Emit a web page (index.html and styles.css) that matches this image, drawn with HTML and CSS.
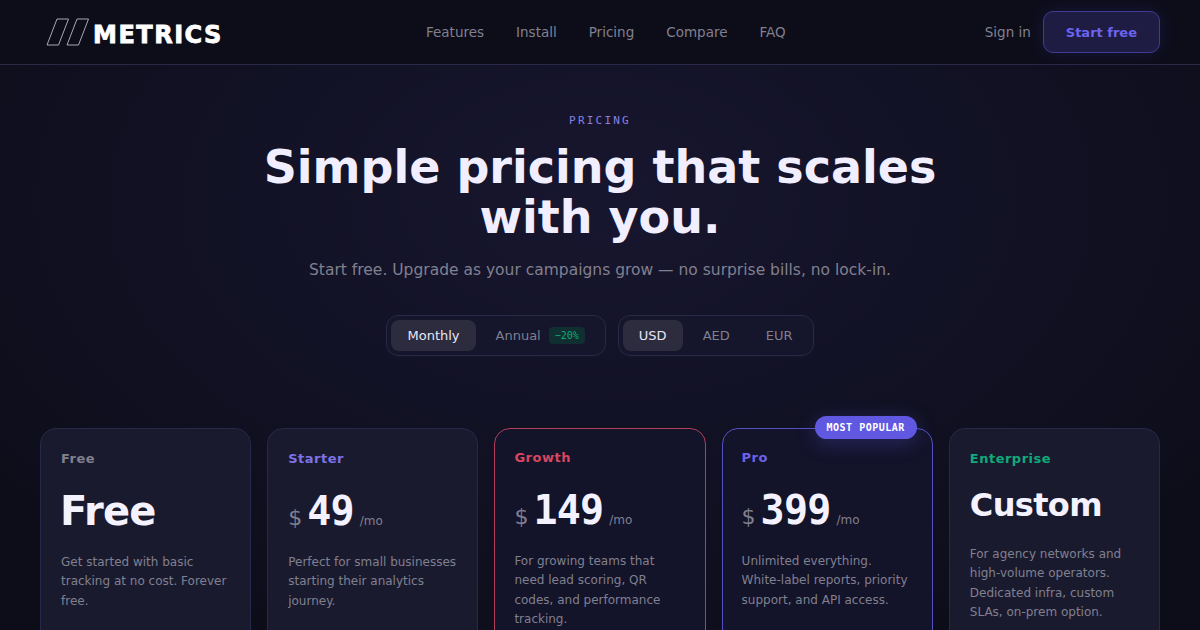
FILE: index.html
```html
<!DOCTYPE html>
<html lang="en">
<head>
    <meta charset="UTF-8">
    <meta name="viewport" content="width=device-width, initial-scale=1.0">
    <title>Pricing - Metrics</title>
    <link rel="stylesheet" href="styles.css">
</head>
<body>
    <!-- Navigation Bar -->
    <nav class="topbar">
        <a class="logo" href="#">
            <svg class="logo-mark" width="44" height="28" viewBox="0 0 44 28" fill="none" stroke="#a6a6b4" stroke-width="1">
                <path d="M1 27L11 1H22.500L12.500 27Z"/>
                <path d="M21 27L31 1H42.500L32.500 27Z"/>
            </svg>
            <span class="logo-text">METRICS</span>
        </a>
        <ul class="nav-links">
            <li><a href="#">Features</a></li>
            <li><a href="#">Install</a></li>
            <li><a href="#">Pricing</a></li>
            <li><a href="#">Compare</a></li>
            <li><a href="#">FAQ</a></li>
        </ul>
        <div class="nav-actions">
            <a class="sign-in" href="#">Sign in</a>
            <a class="start-free" href="#">Start free</a>
        </div>
    </nav>

    <!-- Hero -->
    <header class="hero">
        <p class="eyebrow">PRICING</p>
        <h1>Simple pricing that scales<br>with you.</h1>
        <p class="subtitle">Start free. Upgrade as your campaigns grow — no surprise bills, no lock-in.</p>
        <div class="toggles">
            <div class="toggle">
                <button class="toggle-btn active">Monthly</button>
                <button class="toggle-btn">Annual <span class="save-badge">−20%</span></button>
            </div>
            <div class="toggle">
                <button class="toggle-btn active">USD</button>
                <button class="toggle-btn">AED</button>
                <button class="toggle-btn">EUR</button>
            </div>
        </div>
    </header>

    <!-- Plans -->
    <section class="plans">
        <article class="plan">
            <h3 class="plan-name muted">Free</h3>
            <div class="price"><span class="price-word">Free</span></div>
            <p class="plan-desc">Get started with basic tracking at no cost. Forever free.</p>
        </article>
        <article class="plan">
            <h3 class="plan-name indigo">Starter</h3>
            <div class="price"><span class="currency">$</span><span class="amount">49</span><span class="period">/mo</span></div>
            <p class="plan-desc">Perfect for small businesses starting their analytics journey.</p>
        </article>
        <article class="plan plan-growth">
            <h3 class="plan-name red">Growth</h3>
            <div class="price"><span class="currency">$</span><span class="amount">149</span><span class="period">/mo</span></div>
            <p class="plan-desc">For growing teams that need lead scoring, QR codes, and performance tracking.</p>
        </article>
        <article class="plan plan-pro">
            <span class="popular">MOST POPULAR</span>
            <h3 class="plan-name violet">Pro</h3>
            <div class="price"><span class="currency">$</span><span class="amount">399</span><span class="period">/mo</span></div>
            <p class="plan-desc">Unlimited everything. White-label reports, priority support, and API access.</p>
        </article>
        <article class="plan">
            <h3 class="plan-name green">Enterprise</h3>
            <div class="price price-custom"><span class="price-word">Custom</span></div>
            <p class="plan-desc">For agency networks and high-volume operators. Dedicated infra, custom SLAs, on-prem option.</p>
        </article>
    </section>
</body>
</html>
```

FILE: styles.css
```css
/* Global Styles */
html, body {
    height: 630px;
    overflow: hidden;
}

body {
    margin: 0;
    font-family: 'DejaVu Sans', sans-serif;
    color: #f0eeff;
    background:
        radial-gradient(ellipse 760px 480px at 600px 200px, #17162f 0%, rgba(23, 22, 47, 0) 100%),
        #0d0d1a;
}

/* Navigation Bar */
.topbar {
    height: 64px;
    padding: 0 40px;
    display: flex;
    justify-content: space-between;
    align-items: center;
    background-color: #0d0d1a;
    border-bottom: 1px solid #2a2947;
}

.logo {
    display: flex;
    align-items: center;
    gap: 3px;
    padding-left: 6px;
    padding-right: 4px;
    text-decoration: none;
}

.logo-text {
    margin-top: 5px;
    font-family: 'DejaVu Sans', sans-serif;
    font-weight: 700;
    font-size: 24px;
    letter-spacing: 1.5px;
    color: #ffffff;
    -webkit-text-stroke: 0.8px #ffffff;
}

.nav-links {
    list-style: none;
    display: flex;
    gap: 32px;
    margin: 0 0 2px;
    padding: 0;
}

.nav-links a {
    text-decoration: none;
    color: #80808f;
    font-size: 13.5px;
}

.nav-actions {
    display: flex;
    align-items: center;
    gap: 12px;
}

.sign-in {
    text-decoration: none;
    color: #80808f;
    font-size: 13.5px;
}

.start-free {
    padding: 12.5px 22px;
    text-decoration: none;
    font-size: 13px;
    font-weight: 700;
    color: #6c63ee;
    background-color: #1e1c42;
    border: 1px solid #403c92;
    border-radius: 10px;
    box-shadow: 0 0 16px rgba(70, 62, 190, 0.2);
}

/* Hero */
.hero {
    padding-top: 49px;
    text-align: center;
}

.eyebrow {
    margin: 0;
    font-family: 'DejaVu Sans Mono', monospace;
    font-size: 11px;
    line-height: 14px;
    letter-spacing: 2.2px;
    color: #8a80e4;
}

.hero h1 {
    margin: 14px 0 0;
    font-size: 46px;
    font-weight: 700;
    line-height: 50px;
    color: #f0eeff;
}

.subtitle {
    margin: 15px 0 0;
    font-size: 15.500px;
    line-height: 26px;
    color: #80808f;
}

.toggles {
    display: flex;
    justify-content: center;
    gap: 12px;
    margin-top: 32px;
}

.toggle {
    display: flex;
    gap: 4px;
    padding: 4px;
    background-color: #15152b;
    border: 1px solid #2a2947;
    border-radius: 12px;
}

.toggle-btn {
    display: flex;
    align-items: center;
    gap: 8px;
    height: 31px;
    padding: 0 16px;
    font-family: inherit;
    font-size: 13px;
    color: #80808f;
    background: none;
    border: none;
    border-radius: 8px;
}

.toggle-btn.active {
    color: #e8e6f6;
    background-color: #2c2c3e;
}

.save-badge {
    padding: 3px 6px;
    font-family: 'DejaVu Sans Mono', monospace;
    font-size: 10px;
    color: #10a97a;
    background-color: #0f2f31;
    border-radius: 4px;
}

/* Plans */
.plans {
    display: grid;
    grid-template-columns: repeat(5, 1fr);
    gap: 16px;
    margin-top: 72px;
    padding: 0 40px;
}

.plan {
    position: relative;
    min-height: 320px;
    padding: 21px 20px 20px;
    background-color: #1a1a2e;
    border: 1px solid #28284a;
    border-radius: 16px;
}

.plan-growth,
.plan-pro {
    padding: 20px 19px 20px;
    background-color: #13132a;
}

.plan-growth {
    border-color: #b03f5c;
}

.plan-pro {
    border-color: #5550c4;
}

.popular {
    position: absolute;
    top: -13px;
    right: 15px;
    padding: 5px 12px;
    font-family: 'DejaVu Sans Mono', monospace;
    font-size: 10px;
    font-weight: 700;
    line-height: 13px;
    letter-spacing: 0.5px;
    white-space: nowrap;
    color: #ffffff;
    background-color: #6058e0;
    border-radius: 12px;
    box-shadow: 0 4px 20px rgba(96, 88, 224, 0.3);
}

.plan-name {
    margin: 0;
    font-size: 13px;
    font-weight: 700;
    line-height: 18px;
    letter-spacing: 0.5px;
}

.muted { color: #80808f; }
.indigo { color: #7c72e8; }
.red { color: #d8465f; }
.violet { color: #6c63e8; }
.green { color: #10a97a; }

.price {
    display: flex;
    align-items: baseline;
    gap: 6px;
    height: 50px;
    margin-top: 20px;
}

.price-word {
    margin-left: -1px;
    font-size: 40px;
    font-weight: 700;
    letter-spacing: -0.8px;
    color: #f4f2ff;
}

.price-custom {
    height: 44px;
    margin-top: 18px;
}

.price-custom .price-word {
    margin-left: 0;
    font-size: 32px;
    letter-spacing: -0.64px;
}

.currency {
    margin-right: -1px;
    font-size: 22px;
    color: #80808f;
}

.amount {
    font-family: 'DejaVu Sans Mono', monospace;
    font-size: 40px;
    font-weight: 700;
    letter-spacing: -0.8px;
    color: #f4f2ff;
}

.period {
    font-size: 12px;
    color: #80808f;
}

.plan-desc {
    margin: 14.700px 0 0;
    font-size: 12px;
    line-height: 19.5px;
    color: #80808f;
}
```
